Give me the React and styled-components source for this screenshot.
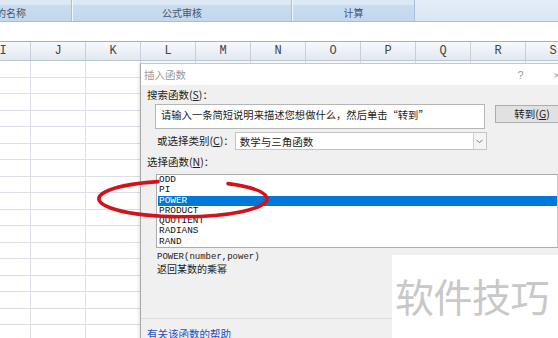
import React from "react"
import styled, { createGlobalStyle } from "styled-components"

const GlobalStyle = createGlobalStyle`
  html, body {
    margin: 0;
    padding: 0;
    background: #fff;
    overflow: hidden;
  }
  body {
    font-family: "Noto Sans CJK SC", "Noto Sans", sans-serif;
  }
`

const COLUMNS = ["I", "J", "K", "L", "M", "N", "O", "P", "Q", "R", "S"]
const ROWS = 17

const FUNCTIONS = ["ODD", "PI", "POWER", "PRODUCT", "QUOTIENT", "RADIANS", "RAND"]

const App = () => {
  return (
    <Page>
      <GlobalStyle />
      <Ribbon>
        <RibbonGroup width={142} offset={-70}>定义的名称</RibbonGroup>
        <RibbonGroup width={220}>公式审核</RibbonGroup>
        <RibbonGroup width={123}>计算</RibbonGroup>
        <RibbonTail />
      </Ribbon>
      <FormulaGap />
      <Sheet>
        <HeaderRow>
          {COLUMNS.map((c) => (
            <HeaderCell key={c}>{c}</HeaderCell>
          ))}
        </HeaderRow>
        {Array.from({ length: ROWS }).map((_, r) => (
          <GridRow key={r}>
            {COLUMNS.map((c) => (
              <GridCell key={c} />
            ))}
          </GridRow>
        ))}
      </Sheet>

      {/* the dialog floats over the sheet like a real window */}
      <Dialog>
        <TitleBar>
          <Title>插入函数</Title>
          <TitleButtons>
            <span>?</span>
            <span>×</span>
          </TitleButtons>
        </TitleBar>
        <Body>
          <Label>
            搜索函数(<u>S</u>)：
          </Label>
          <SearchRow>
            <SearchBox>请输入一条简短说明来描述您想做什么，然后单击“转到”</SearchBox>
            <GoButton>
              转到(<u>G</u>)
            </GoButton>
          </SearchRow>
          <CategoryRow>
            <Label indent={10}>
              或选择类别(<u>C</u>)：
            </Label>
            <Select>
              <span>数学与三角函数</span>
              <SelectArrow>
                <svg width="7" height="5" viewBox="0 0 7 5">
                  <path d="M0.5 0.8 L3.5 3.8 L6.5 0.8" fill="none" stroke="#777" strokeWidth="1" />
                </svg>
              </SelectArrow>
            </Select>
          </CategoryRow>
          <Label spaced>
            选择函数(<u>N</u>)：
          </Label>
          <ListBox>
            {FUNCTIONS.map((f) => (
              <ListItem key={f} selected={f === "POWER"}>
                {f}
              </ListItem>
            ))}
          </ListBox>
          <Signature>POWER(number,power)</Signature>
          <Description>返回某数的乘幂</Description>
          <Separator />
          <HelpLink>有关该函数的帮助</HelpLink>
        </Body>
      </Dialog>

      {/* hand drawn marker round the POWER row, open over the list top */}
      <Marker width="184" height="48" viewBox="88 174 184 48">
        <path
          d="M158 181.6 A84 18 0 1 0 228 183.6"
          fill="none"
          stroke="#d4121c"
          strokeWidth="3.6"
          strokeLinecap="round"
        />
      </Marker>

      <Watermark>软件技巧</Watermark>
    </Page>
  )
}

const Page = styled.div`
  position: relative;
  width: 558px;
  height: 338px;
  overflow: hidden;
  background: #fff;
`

const Ribbon = styled.div`
  display: flex;
  height: 21px;
  border-bottom: 1px solid #a9bdd6;
  background: #dfe9f6;
`

const RibbonGroup = styled.div`
  flex: 0 0 ${(p) => p.width}px;
  margin-left: ${(p) => p.offset || 0}px;
  box-sizing: border-box;
  padding-top: 5px;
  line-height: 15px;
  text-align: center;
  font-size: 10px;
  color: #3f5678;
  border-left: 1px solid #f1f6fc;
  border-right: 1px solid #a9bfdb;
  background: linear-gradient(
    to bottom,
    #dde8f5 0px,
    #dde8f5 5px,
    #cadcf0 5px,
    #c3d7ed 100%
  );
`

const RibbonTail = styled.div`
  flex: 1;
  background: linear-gradient(to bottom, #e4edf8, #dae6f4);
`

const FormulaGap = styled.div`
  height: 19px;
  background: #fff;
`

const Sheet = styled.div`
  margin-left: -24px;
`

const HeaderRow = styled.div`
  display: flex;
  height: 20px;
  box-sizing: border-box;
  border-top: 1px solid #9fb4cc;
  border-bottom: 1px solid #b7c5d6;
  background: linear-gradient(to bottom, #f7f9fc, #e2e8f0);
`

const HeaderCell = styled.div`
  flex: 0 0 55px;
  box-sizing: border-box;
  border-right: 1px solid #c6d0dc;
  text-align: center;
  font-family: "Liberation Mono", monospace;
  font-size: 12px;
  line-height: 18px;
  color: #444;
`

const GridRow = styled.div`
  display: flex;
  height: 16.5px;
`

const GridCell = styled.div`
  flex: 0 0 55px;
  box-sizing: border-box;
  border-right: 1px solid #dcdfe8;
  border-bottom: 1px solid #dcdfe8;
`

const Dialog = styled.div`
  position: absolute;
  left: 140px;
  top: 63px;
  width: 440px;
  height: 290px;
  box-sizing: border-box;
  border-left: 1px solid #a7a7a7;
  border-top: 1px solid #c9c9c9;
  background: #f0f0f0;
  box-shadow: -1px 0 3px rgba(0, 0, 0, 0.12);
  font-size: 10.5px;
  color: #222;
`

const TitleBar = styled.div`
  display: flex;
  align-items: center;
  justify-content: space-between;
  height: 21px;
  background: #fff;
  padding-left: 3px;
`

const Title = styled.span`
  color: #9a9a9a;
  font-size: 10.5px;
`

const TitleButtons = styled.div`
  display: flex;
  gap: 30px;
  margin-right: 20px;
  color: #a0a0a0;
  font-family: "Liberation Sans", sans-serif;
  font-size: 11px;
`

const Body = styled.div`
  display: flex;
  flex-direction: column;
  padding: 3px 0 0 6px;
`

const Label = styled.div`
  line-height: 14px;
  margin-left: ${(p) => p.indent || 0}px;
  margin-top: ${(p) => (p.spaced ? 5 : 0)}px;
  white-space: nowrap;

  u {
    text-decoration: underline;
  }
`

const SearchRow = styled.div`
  display: flex;
  align-items: flex-start;
  margin-top: 2px;
  margin-left: 8px;
`

const SearchBox = styled.div`
  width: 330px;
  height: 25px;
  box-sizing: border-box;
  padding: 3px 5px;
  background: #fff;
  border: 1px solid #b5b5b5;
  font-size: 10.3px;
  line-height: 14px;
  white-space: nowrap;
  overflow: hidden;
`

const GoButton = styled.div`
  flex: 0 0 74px;
  height: 18px;
  margin-top: 1px;
  margin-left: 10px;
  box-sizing: border-box;
  border: 1px solid #adadad;
  background: #e1e1e1;
  text-align: center;
  line-height: 16px;
`

const CategoryRow = styled.div`
  display: flex;
  align-items: center;
  margin-top: 3px;
`

const Select = styled.div`
  display: flex;
  align-items: center;
  justify-content: space-between;
  width: 252px;
  height: 18px;
  margin-left: 1px;
  box-sizing: border-box;
  padding-left: 4px;
  background: #fff;
  border: 1px solid #c4c4c4;
  white-space: nowrap;
`

const SelectArrow = styled.div`
  display: flex;
  align-items: center;
  justify-content: center;
  width: 13px;
  height: 16px;
  box-sizing: border-box;
  border-left: 1px solid #d2d2d2;
  background: #f4f4f4;
`

const ListBox = styled.div`
  width: 402px;
  height: 74px;
  margin-top: 5px;
  margin-left: 9px;
  box-sizing: border-box;
  border: 1px solid #acacac;
  border-right-color: #c8c8c8;
  background: #fff;
  padding-left: 1px;
`

const ListItem = styled.div`
  height: 10.3px;
  line-height: 10.3px;
  padding-left: 1px;
  font-family: "Liberation Mono", monospace;
  font-size: 9.4px;
  color: ${(p) => (p.selected ? "#fff" : "#111")};
  background: ${(p) => (p.selected ? "#0078d7" : "transparent")};
`

const Signature = styled.div`
  margin-top: 3px;
  margin-left: 10px;
  font-family: "Liberation Mono", monospace;
  font-size: 9px;
  line-height: 12px;
`

const Description = styled.div`
  margin-left: 10px;
  line-height: 12px;
  font-size: 10px;
`

const Separator = styled.div`
  height: 1px;
  margin-top: 43px;
  margin-left: -6px;
  background: #dcdcdc;
`

const HelpLink = styled.div`
  margin-top: 8px;
  line-height: 14px;
  color: #1a4fc4;
`

const Marker = styled.svg`
  position: absolute;
  left: 88px;
  top: 174px;
  pointer-events: none;
`

const Watermark = styled.div`
  position: absolute;
  left: 392px;
  top: 255px;
  right: 0;
  bottom: 0;
  background: #fff;
  padding: 19px 0 0 3px;
  font-size: 39px;
  line-height: 42px;
  letter-spacing: -0.5px;
  color: #c8c8c8;
  white-space: nowrap;
`

export default App
